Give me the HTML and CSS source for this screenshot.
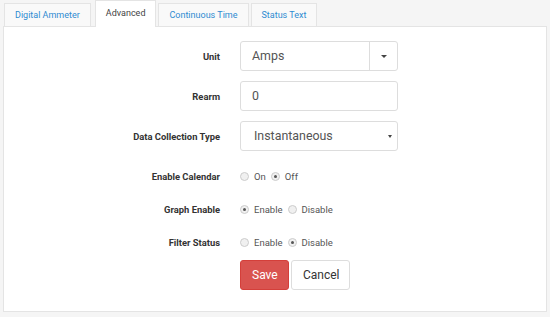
FILE: index.html
```html
<!DOCTYPE html>
<html lang="en">
<head>
    <meta charset="UTF-8">
    <meta name="viewport" content="width=device-width, initial-scale=1.0">
    <title>Advanced</title>
    <link rel="stylesheet" href="styles.css">
</head>
<body>
    <div class="wrap">
        <!-- tabs -->
        <ul class="tabs">
            <li class="tab">Digital Ammeter</li>
            <li class="tab active">Advanced</li>
            <li class="tab">Continuous Time</li>
            <li class="tab">Status Text</li>
        </ul>

        <div class="panel">
            <form class="form">
                <div class="row input-row">
                    <label>Unit</label>
                    <div class="split">
                        <div class="split-text">Amps</div>
                        <div class="split-btn"><span class="caret"></span></div>
                    </div>
                </div>
                <div class="row input-row">
                    <label>Rearm</label>
                    <div class="field">0</div>
                </div>
                <div class="row input-row last-input">
                    <label>Data Collection Type</label>
                    <div class="field select">Instantaneous<span class="caret small"></span></div>
                </div>

                <div class="row radio-row">
                    <label>Enable Calendar</label>
                    <div class="radios">
                        <span class="radio"></span><span class="opt">On</span>
                        <span class="radio checked"></span><span class="opt">Off</span>
                    </div>
                </div>
                <div class="row radio-row">
                    <label>Graph Enable</label>
                    <div class="radios">
                        <span class="radio checked"></span><span class="opt">Enable</span>
                        <span class="radio"></span><span class="opt">Disable</span>
                    </div>
                </div>
                <div class="row radio-row last-radio">
                    <label>Filter Status</label>
                    <div class="radios">
                        <span class="radio"></span><span class="opt">Enable</span>
                        <span class="radio checked"></span><span class="opt">Disable</span>
                    </div>
                </div>

                <div class="row buttons">
                    <span></span>
                    <div class="btns">
                        <button type="button" class="btn save">Save</button>
                        <button type="button" class="btn cancel">Cancel</button>
                    </div>
                </div>
            </form>
        </div>
    </div>
</body>
</html>
```

FILE: styles.css
```css
body{
    margin: 0;
    background-color: #f5f5f5;
    font-family: Roboto, "Liberation Sans", sans-serif;
    color: #333;
}
.wrap{
    padding: 3px 3px 0 3px;
}
/* tabs */
.tabs{
    list-style: none;
    margin: 0;
    padding: 0 0 0 1px;
    display: flex;
    gap: 2px;
    height: 23px;
    align-items: flex-end;
}
.tab{
    height: 22px;
    line-height: 22px;
    padding: 0 10px;
    font-size: 9px;
    color: #2f8bd1;
    background-color: #f9f9f9;
    border: 1px solid #e4e4e4;
    border-bottom: none;
}
.tab:first-child{
    margin-right: 2px;
}
.tab.active{
    height: 26px;
    line-height: 24px;
    margin-bottom: -1px;
    background-color: #fff;
    color: #444;
    border-color: #e4e4e4;
    position: relative;
}
/* panel */
.panel{
    background-color: #fff;
    border: 1px solid #e4e4e4;
    height: 286px;
    box-sizing: border-box;
}
.form{
    padding-top: 14px;
}
.row{
    display: grid;
    grid-template-columns: 216px 158px;
    column-gap: 20px;
    align-items: center;
}
.row label{
    text-align: right;
    font-size: 9.4px;
    font-weight: bold;
    color: #333;
}
.input-row{
    height: 30px;
    margin-bottom: 10px;
}
.input-row.last-input{
    margin-bottom: 14px;
}
.field{
    height: 30px;
    box-sizing: border-box;
    border: 1px solid #ddd;
    border-radius: 3px;
    padding: 0 11px;
    line-height: 28px;
    font-size: 12.4px;
    color: #555;
}
.select{
    position: relative;
    padding-left: 13px;
}
.split{
    display: flex;
    height: 30px;
    box-sizing: border-box;
    border: 1px solid #ddd;
    border-radius: 3px;
}
.split-text{
    flex: 1;
    padding: 0 11px;
    line-height: 28px;
    font-size: 12.4px;
    color: #555;
}
.split-btn{
    width: 27px;
    border-left: 1px solid #ddd;
    display: flex;
    align-items: center;
    justify-content: center;
}
.caret{
    width: 0;
    height: 0;
    border-left: 3px solid transparent;
    border-right: 3px solid transparent;
    border-top: 3px solid #444;
}
.caret.small{
    position: absolute;
    right: 5px;
    top: 13px;
    border-left-width: 2px;
    border-right-width: 2px;
}
/* radios */
.radio-row{
    height: 22px;
    margin-bottom: 11px;
}
.radio-row.last-radio{
    margin-bottom: 7px;
}
.radios{
    display: flex;
    align-items: center;
    padding-left: 0;
}
.radio{
    width: 7px;
    height: 7px;
    border: 1px solid #ccc;
    border-radius: 50%;
    background-color: #f0f0f0;
    margin-right: 5px;
    position: relative;
}
.radio.checked::after{
    content: "";
    position: absolute;
    left: 2px;
    top: 2px;
    width: 3px;
    height: 3px;
    border-radius: 50%;
    background-color: #555;
}
.opt{
    font-size: 9.5px;
    color: #555;
    margin-right: 5px;
}
/* buttons */
.buttons{
    height: 30px;
}
.btns{
    display: flex;
    gap: 2px;
}
.btn{
    height: 30px;
    border-radius: 3px;
    font-family: Roboto, "Liberation Sans", sans-serif;
    font-size: 12px;
    padding: 0 11px;
    cursor: pointer;
}
.save{
    width: 49px;
    background-color: #d9534f;
    border: 1px solid #d43f3a;
    color: #fff;
}
.cancel{
    width: 59px;
    background-color: #fff;
    border: 1px solid #ddd;
    color: #333;
}
```
